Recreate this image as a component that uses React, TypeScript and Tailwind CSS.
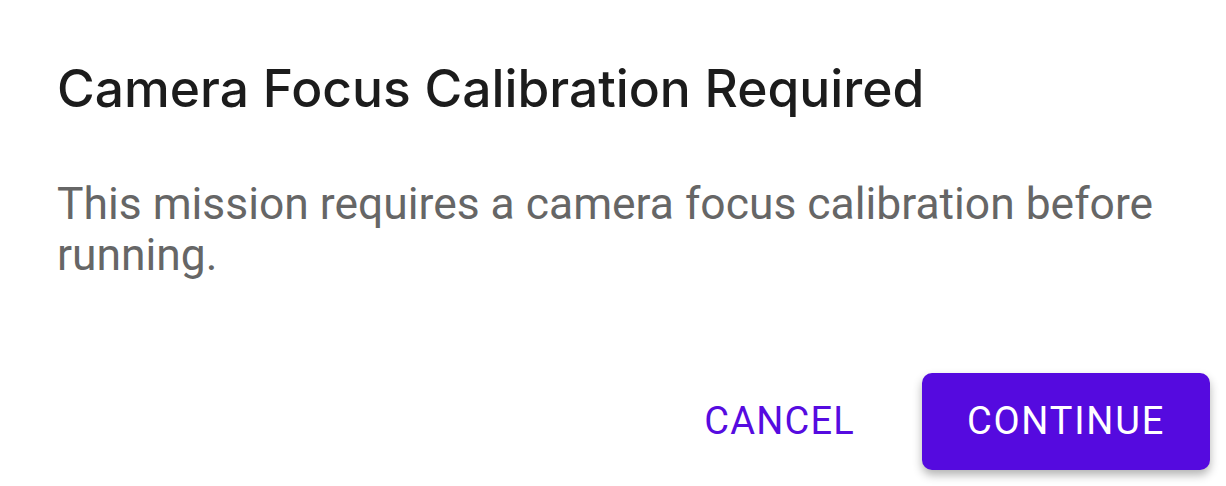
import React from 'react';

export default function App() {
    return (
        <div className="w-[1226px] h-[486px] bg-white flex flex-col overflow-hidden">
            {/* Title */}
            <h2
                className="pt-[58px] pl-[57px] text-[51.5px] leading-[60px] font-medium text-[#1c1c1c]"
                style={{ fontFamily: 'Inter, "Noto Sans", sans-serif' }}
            >
                Camera Focus Calibration Required
            </h2>

            {/* Body */}
            <p
                className="mt-[61px] pl-[57px] pr-[40px] text-[44.4px] leading-[51px] text-[#666666]"
                style={{ fontFamily: 'Roboto, "Liberation Sans", sans-serif' }}
            >
                This mission requires a camera focus calibration before running.
            </p>

            {/* Actions */}
            <div
                className="mt-auto flex justify-end items-center gap-[46px] pr-[16px] pb-[16px]"
                style={{ fontFamily: 'Roboto, "Liberation Sans", sans-serif' }}
            >
                <button
                    type="button"
                    className="h-[97px] px-[21px] text-[38px] font-normal tracking-[1.2px] uppercase text-[#560be0] bg-transparent rounded-lg"
                >
                    Cancel
                </button>
                <button
                    type="button"
                    className="w-[288px] h-[97px] rounded-[10px] bg-[#550adf] text-white text-[38px] font-normal tracking-[1.8px] uppercase shadow-[0_5px_10px_rgba(0,0,0,0.3)]"
                >
                    Continue
                </button>
            </div>
        </div>
    );
}
